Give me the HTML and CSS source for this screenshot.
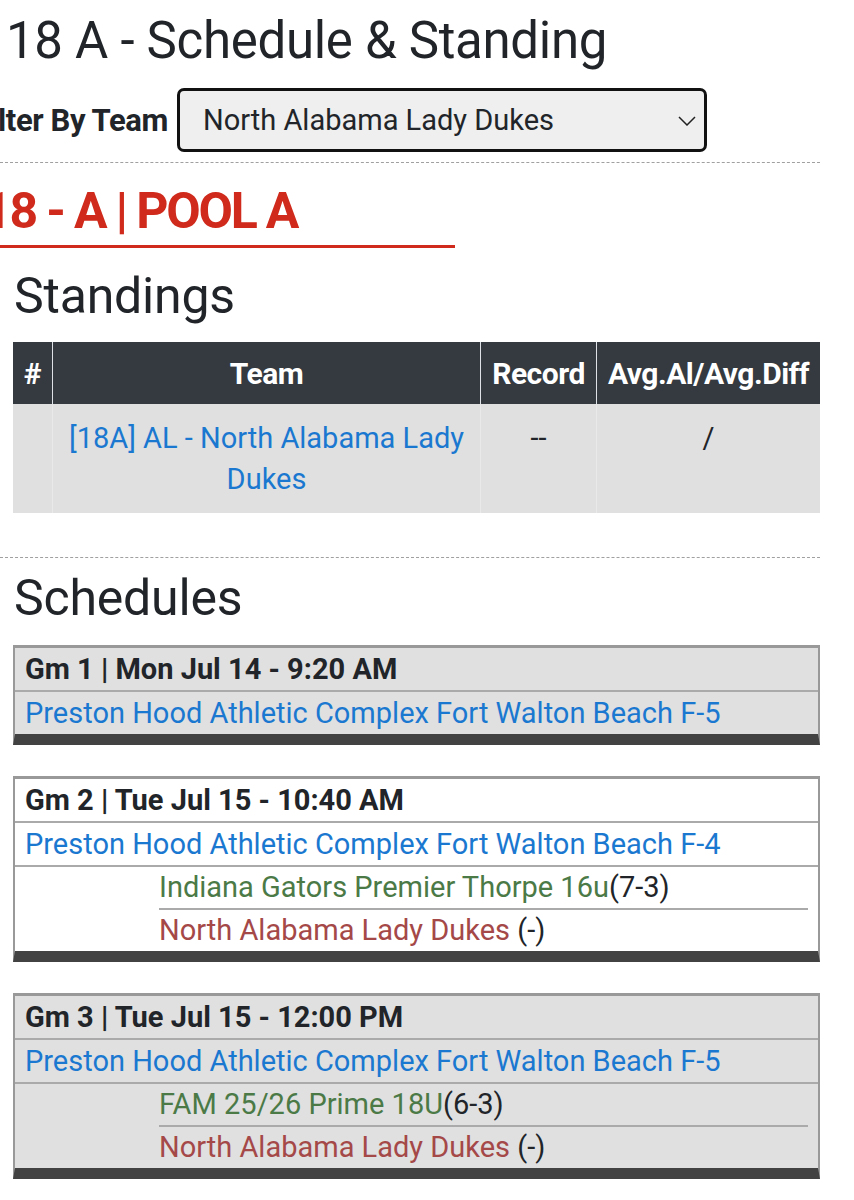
FILE: index.html
```html
<!DOCTYPE html>
<html>
<head>
<meta charset="utf-8">
<title>18 A - Schedule &amp; Standing</title>
<link rel="stylesheet" href="styles.css">
</head>
<body>
<div class="page">
  <h1 class="page-title">18 A - Schedule &amp; Standing</h1>

  <div class="filter">
    <label class="filter-label"><span>Filter By Team</span></label>
    <div class="select">
      <span>North Alabama Lady Dukes</span>
      <svg class="chevron" width="18" height="10" viewBox="0 0 18 10"><path d="M1 1 L9 9 L17 1" fill="none" stroke="#222" stroke-width="1.5"/></svg>
    </div>
  </div>

  <div class="dash"></div>

  <h2 class="pool-title"><span>18 - A | POOL A</span></h2>

  <h3 class="section-title">Standings</h3>
  <table class="standings">
    <thead>
      <tr>
        <th class="col-num">#</th>
        <th class="col-team">Team</th>
        <th class="col-record">Record</th>
        <th class="col-avg">Avg.Al/Avg.Diff</th>
      </tr>
    </thead>
    <tbody>
      <tr>
        <td></td>
        <td><a href="#">[18A] AL - North Alabama Lady Dukes</a></td>
        <td>--</td>
        <td>/</td>
      </tr>
    </tbody>
  </table>

  <div class="dash dash-low"></div>

  <h3 class="section-title schedules-title">Schedules</h3>

  <!-- game 1 -->
  <div class="game shaded">
    <div class="game-head">Gm 1 | Mon Jul 14 - 9:20 AM</div>
    <div class="game-venue"><a href="#">Preston Hood Athletic Complex Fort Walton Beach F-5</a></div>
  </div>

  <!-- game 2 -->
  <div class="game">
    <div class="game-head">Gm 2 | Tue Jul 15 - 10:40 AM</div>
    <div class="game-venue"><a href="#">Preston Hood Athletic Complex Fort Walton Beach F-4</a></div>
    <div class="teams">
      <div class="team"><span class="away">Indiana Gators Premier Thorpe 16u</span>(7-3)</div>
      <div class="team"><span class="home">North Alabama Lady Dukes</span> (-)</div>
    </div>
  </div>

  <!-- game 3 -->
  <div class="game shaded">
    <div class="game-head">Gm 3 | Tue Jul 15 - 12:00 PM</div>
    <div class="game-venue"><a href="#">Preston Hood Athletic Complex Fort Walton Beach F-5</a></div>
    <div class="teams">
      <div class="team"><span class="away">FAM 25/26 Prime 18U</span>(6-3)</div>
      <div class="team"><span class="home">North Alabama Lady Dukes</span> (-)</div>
    </div>
  </div>
</div>
</body>
</html>
```

FILE: styles.css
```css
html, body {
	margin:0;
	padding:0;
	background:#fff;
	overflow-x:hidden;
}
body {
	font-family:Roboto, "Liberation Sans", sans-serif;
	color:#212529;
}
.page {
	width:807px;
	padding:0 0 40px 13px;
}
a {
	color:#1b78d0;
	text-decoration:none;
}

/* title + filter */
.page-title {
	font-size:51px;
	font-weight:400;
	line-height:60px;
	margin:11px 0 0 -7px;
	letter-spacing:-0.3px;
}
.filter {
	display:flex;
	align-items:center;
	margin:17px 0 0 -13px;
}
.filter-label {
	display:flex;
	justify-content:flex-end;
	width:168px;
	flex:none;
	white-space:nowrap;
	font-size:31px;
	font-weight:700;
	margin-right:9px;
	letter-spacing:-0.4px;
}
.select {
	width:493px;
	height:58px;
	border:3px solid #111;
	border-radius:7px;
	background:#efefef;
	display:flex;
	align-items:center;
	justify-content:space-between;
	padding:0 8px 0 23px;
	font-size:29px;
}
.chevron {
	margin-top:1px;
}
.dash {
	margin:10px 0 0 -13px;
	height:0;
	border-top:1px dashed #a0a0a0;
	width:820px;
}
.dash-low {
	margin-top:44px;
}

/* pool */
.pool-title {
	width:455px;
	font-size:50px;
	font-weight:700;
	color:#cf2a1b;
	line-height:60px;
	margin:18px 0 0 -13px;
	padding:0 0 4px;
	border-bottom:3px solid #cf2a1b;
	letter-spacing:-2.2px;
	white-space:nowrap;
}
.pool-title span {
	margin-left:-17px;
}
.section-title {
	font-size:50px;
	font-weight:400;
	line-height:60px;
	margin:18px 0 0 1px;
	letter-spacing:-0.2px;
}

/* standings */
.standings {
	width:807px;
	margin-top:16px;
	border-collapse:collapse;
	font-size:29px;
}
.standings th {
	background:#343a40;
	color:#fff;
	font-size:30px;
	font-weight:700;
	height:62px;
	padding:0 5px;
	border-left:1px solid #dee2e6;
	letter-spacing:-0.5px;
	white-space:nowrap;
}
.standings th:first-child {
	border-left:none;
}
.col-num { width:29px; }
.col-team { width:417px; }
.col-record { width:105px; }
.standings td {
	background:#e0e0e0;
	border-left:1px solid #e9e9e9;
	text-align:center;
	vertical-align:top;
	line-height:41px;
	padding:14px 12px 13px;
	height:82px;
}
.standings td:first-child {
	border-left:none;
}

/* games */
.schedules-title {
	margin-top:10px;
}
.game {
	margin-top:31px;
	border:2px solid #999;
	border-top-width:3px;
	border-bottom:11px solid #424242;
	background:#fff;
	font-size:29px;
}
.schedules-title + .game {
	margin-top:17px;
}
.game.shaded {
	background:#e0e0e0;
}
.game-head {
	font-weight:700;
	height:42px;
	line-height:42px;
	padding:0 10px;
	border-bottom:2px solid #aaa;
}
.game-venue {
	line-height:42px;
	padding:0 10px;
}
.teams {
	border-top:2px solid #aaa;
	padding:0 10px 0 144px;
}
.team {
	line-height:41px;
}
.team + .team {
	border-top:2px solid #aaa;
}
.away { color:#4b7a47; }
.home { color:#a54848; }
```
